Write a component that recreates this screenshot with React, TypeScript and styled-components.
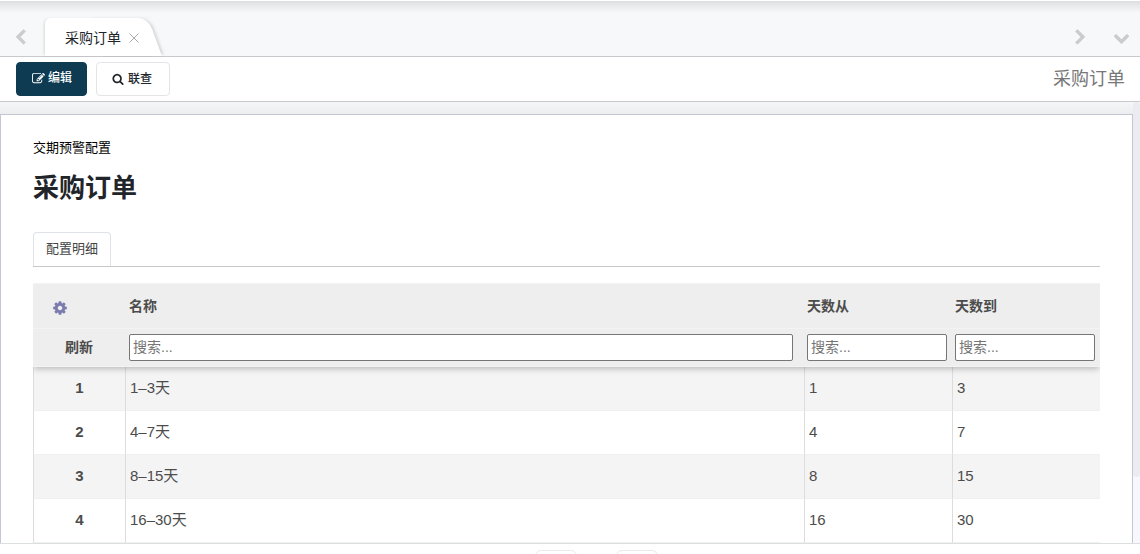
import React from "react";
import styled, { createGlobalStyle, css } from "styled-components";

const GlobalStyle = createGlobalStyle`
  *, *::before, *::after { box-sizing: border-box; }
  body {
    margin: 0;
    font-family: "Liberation Sans", "Noto Sans CJK SC", sans-serif;
    font-size: 14px;
    line-height: 20px;
    color: #212529;
    background: #fff;
  }
  button, input { font: inherit; color: inherit; }
  button { cursor: pointer; }
`;

const Page = styled.div`
  display: flex;
  flex-direction: column;
  height: 100vh;
  overflow: hidden;
`;

const TabBar = styled.header`
  flex: none;
  display: flex;
  align-items: stretch;
  height: 57px;
  padding: 17px 10px 0 12px;
  border-top: 1px solid #fff;
  border-bottom: 1px solid #c9c9cd;
  background: linear-gradient(#dcdee0, #e6e8ea 4px, #f6f8fa 12px);
`;

const IconButton = styled.button`
  display: flex;
  align-items: center;
  padding: 0;
  border: 0;
  background: none;
  color: #ccc;
`;

const PageTab = styled.div`
  position: relative;
  z-index: 0;
  display: flex;
  align-items: center;
  gap: 8px;
  margin: 0 auto 0 16px;
  padding: 2px 16px 0 20px;
  border-radius: 6px 0 0 0;
  background: linear-gradient(#fff, #fff) 0 0 / 80px 100% no-repeat;
  box-shadow: -2px 0 3px -1px rgba(0, 0, 0, 0.12);

  &::after {
    content: "";
    position: absolute;
    z-index: -1;
    top: 0;
    bottom: 0;
    right: 0;
    width: 60px;
    border-radius: 0 10px 0 0;
    background: #fff;
    box-shadow: 3px 0 3px -1px rgba(0, 0, 0, 0.14);
    transform: skewX(20deg);
    transform-origin: 50% 50%;
  }
`;

const TabNav = styled.div`
  display: flex;
  gap: 24px;
`;

const Toolbar = styled.div`
  flex: none;
  display: flex;
  align-items: center;
  gap: 9px;
  height: 45px;
  padding: 0 15px 0 16px;
  border-bottom: 1px solid #c9c9cd;
  background: #fff;
`;

const ActionButton = styled.button<{ $primary?: boolean }>`
  display: flex;
  align-items: center;
  gap: 3px;
  height: 34px;
  padding: 0 15px;
  border: 1px solid #e2e4e6;
  border-radius: 4px;
  background: #fff;
  font-size: 12px;
  font-weight: 500;
  ${(p) =>
    p.$primary
      ? css`
          border-color: #0f3b52;
          background: #0f3b52;
          color: #fff;
          padding: 0 14px 2px 15px;
        `
      : css`
          gap: 4px;
          padding-right: 17px;
        `}
`;

const Crumb = styled.span`
  margin-left: auto;
  font-size: 18px;
  line-height: 24px;
  color: #777;
`;

const Body = styled.main`
  flex: 1;
  min-height: 0;
  display: flex;
  overflow: hidden;
  background: #f7f8fb;
`;

const Content = styled.div`
  flex: 1;
  min-width: 0;
  padding-top: 12px;
  background: linear-gradient(#f5f6f7, #ebedef 12px);
`;

const Sheet = styled.section`
  min-height: 440px;
  padding: 23px 32px;
  border: 1px solid #c6c5d2;
  background: #fff;
`;

const ScrollTrack = styled.div`
  width: 7px;
  background: #f7f8fb;
`;

const ScrollThumb = styled.div`
  height: 375px;
  border-radius: 4px;
  background: #ebecf1;
`;

const FieldLabel = styled.div`
  font-size: 13px;
  color: #000;
`;

const Title = styled.h1`
  margin: 10px 0 24px;
  font-size: 26px;
  line-height: 40px;
  font-weight: 700;
`;

const Tabs = styled.div`
  display: flex;
  align-items: flex-end;
  height: 35px;
  margin-bottom: 16px;
  border-bottom: 1px solid #c8c8c8;
`;

const DetailTab = styled.button`
  flex: none;
  height: 34px;
  padding: 0 12px 2px;
  border: 1px solid #dee2e6;
  border-bottom: 0;
  border-radius: 4px 4px 0 0;
  background: #fff;
  font-size: 13px;
  color: #444;
`;

const Table = styled.table`
  width: 100%;
  table-layout: fixed;
  border-collapse: separate;
  border-spacing: 0;
  color: #4c4c4c;
`;

const Head = styled.thead`
  position: relative;
  background: #eee;
  box-shadow: 0 3px 6px -1px rgba(0, 0, 0, 0.24);
  clip-path: inset(0 0 -10px 0);
`;

const HeadCell = styled.th<{ $pad?: string; $center?: boolean }>`
  height: 46px;
  padding: ${(p) => p.$pad ?? "0 5px 0 3px"};
  border-top: 1px solid #f3f3f3;
  border-bottom: 1px solid #f3f3f3;
  text-align: ${(p) => (p.$center ? "center" : "left")};
  font-weight: 700;
`;

const FilterCell = styled(HeadCell)`
  height: 38px;
  border-top: 0;
`;

const SearchInput = styled.input`
  display: block;
  width: 100%;
  height: 27px;
  padding: 0 3px 2px;
  border: 1px solid #767676;
  border-radius: 2px;
  background: #fff;
  font-weight: 400;

  &::placeholder {
    color: #757575;
    opacity: 1;
  }
`;

const Row = styled.tr`
  &:nth-child(odd) {
    background: #f4f4f4;
  }
`;

const cell = css`
  height: 44px;
  padding: 0 4px 1px;
  border-left: 1px solid #dcdcdf;
  border-bottom: 1px solid #f0f0f1;
  font-size: 15px;
`;

const Cell = styled.td`
  ${cell}
`;

const IndexCell = styled.th`
  ${cell}
  text-align: center;
`;

const Footer = styled.footer`
  flex: 0 0 11px;
  display: flex;
  justify-content: center;
  gap: 39px;
  padding: 6px 0 0 53px;
  border-top: 1px solid #dcdfe0;
  background: #fff;
  overflow: hidden;
`;

const PagerButton = styled.button`
  flex: none;
  width: 42px;
  height: 30px;
  border: 1px solid #e8eaeb;
  border-radius: 6px;
  background: #fff;
`;

const icons = {
  left: "M1427 301l-531 531 531 531q19 19 19 45t-19 45l-166 166q-19 19-45 19t-45-19l-742-742q-19-19-19-45t19-45l742-742q19-19 45-19t45 19l166 166q19 19 19 45t-19 45z",
  right:
    "M1363 877l-742 742q-19 19-45 19t-45-19l-166-166q-19-19-19-45t19-45l531-531-531-531q-19-19-19-45t19-45l166-166q19-19 45-19t45 19l742 742q19 19 19 45t-19 45z",
  down: "M1683 808l-742 741q-19 19-45 19t-45-19l-742-741q-19-19-19-45.500t19-45.500l166-165q19-19 45-19t45 19l531 531 531-531q19-19 45-19t45 19l166 165q19 19 19 45.500t-19 45.500z",
  edit: "M888 1184l116-116-152-152-116 116v56h96v96h56zm440-720q-16-16-33 1l-350 350q-17 17-1 33t33-1l350-350q17-17 1-33zm80 594v190q0 119-84.500 203.500t-203.500 84.500h-832q-119 0-203.500-84.500t-84.500-203.500v-832q0-119 84.500-203.500t203.500-84.500h832q63 0 117 25 15 7 18 23 3 17-9 29l-49 49q-14 14-32 8-23-6-45-6h-832q-66 0-113 47t-47 113v832q0 66 47 113t113 47h832q66 0 113-47t47-113v-126q0-13 9-22l64-64q15-15 35-7t20 29zm-96-738l288 288-672 672h-288v-288zm444 132l-92 92-288-288 92-92q28-28 68-28t68 28l152 152q28 28 28 68t-28 68z",
  search:
    "M1216 832q0-185-131.500-316.500t-316.500-131.500-316.500 131.500-131.500 316.500 131.500 316.500 316.500 131.500 316.500-131.500 131.500-316.500zm512 832q0 52-38 90t-90 38q-54 0-90-38l-343-342q-179 124-399 124-143 0-273.500-55.500t-225-150-150-225-55.500-273.500 55.500-273.500 150-225 225-150 273.500-55.500 273.500 55.500 225 150 150 225 55.500 273.500q0 220-124 399l343 343q37 37 37 90z",
  cog: "M1152 896q0-106-75-181t-181-75-181 75-75 181 75 181 181 75 181-75 75-181zm512-109v222q0 12-8 23t-20 13l-185 28q-19 54-39 91 35 50 107 138 10 12 10 25t-9 23q-27 37-99 108t-94 71q-12 0-26-9l-138-108q-44 23-91 38-16 136-29 186-7 28-36 28h-222q-14 0-24.500-8.500t-11.500-21.500l-28-184q-49-16-90-37l-141 107q-10 9-25 9-14 0-25-11-126-114-165-168-7-10-7-23 0-12 8-23 15-21 51-66.500t54-70.500q-27-50-41-99l-183-27q-13-2-21-12.500t-8-23.500v-222q0-12 8-23t19-13l186-28q14-46 39-92-40-57-107-138-10-12-10-24 0-10 9-23 26-36 98.500-107.500t94.500-71.500q13 0 26 10l138 107q44-23 91-38 16-136 29-186 7-28 36-28h222q14 0 24.500 8.500t11.500 21.500l28 184q49 16 90 37l142-107q9-9 24-9 13 0 25 10 129 119 165 170 7 8 7 22 0 12-8 23-15 21-51 66.500t-54 70.500q26 50 41 98l183 28q13 2 21 12.500t8 23.500z",
};

function Icon({ name, size }: { name: keyof typeof icons; size: number }) {
  return (
    <svg width={size} height={size} viewBox="0 0 1792 1792" fill="currentColor" aria-hidden="true">
      <path d={icons[name]} />
    </svg>
  );
}

const SettingsButton = styled(IconButton)`
  color: #7c7bad;
`;

const CloseIcon = () => (
  <svg width="10" height="10" viewBox="0 0 10 10" stroke="#aaa" fill="none" aria-hidden="true">
    <path d="M0.500 0.500L9.500 9.500M9.500 0.500L0.500 9.500" />
  </svg>
);

const rows = [
  { name: "1–3天", from: 1, to: 3 },
  { name: "4–7天", from: 4, to: 7 },
  { name: "8–15天", from: 8, to: 15 },
  { name: "16–30天", from: 16, to: 30 },
];

export default function App() {
  return (
    <Page>
      <GlobalStyle />
      <TabBar>
        <IconButton aria-label="向左">
          <Icon name="left" size={17} />
        </IconButton>
        <PageTab>
          采购订单
          <IconButton aria-label="关闭">
            <CloseIcon />
          </IconButton>
        </PageTab>
        <TabNav>
          <IconButton aria-label="向右">
            <Icon name="right" size={17} />
          </IconButton>
          <IconButton aria-label="更多">
            <Icon name="down" size={17} />
          </IconButton>
        </TabNav>
      </TabBar>
      <Toolbar>
        <ActionButton $primary>
          <Icon name="edit" size={13} />
          编辑
        </ActionButton>
        <ActionButton>
          <Icon name="search" size={12} />
          联查
        </ActionButton>
        <Crumb>采购订单</Crumb>
      </Toolbar>
      <Body>
        <Content>
          <Sheet>
            <FieldLabel>交期预警配置</FieldLabel>
            <Title>采购订单</Title>
            <Tabs>
              <DetailTab>配置明细</DetailTab>
            </Tabs>
            <Table>
              <colgroup>
                <col width="92" />
                <col />
                <col width="148" />
                <col width="148" />
              </colgroup>
              <Head>
                <tr>
                  <HeadCell $pad="4px 19px 0">
                    <SettingsButton aria-label="设置">
                      <Icon name="cog" size={16} />
                    </SettingsButton>
                  </HeadCell>
                  <HeadCell $pad="0 11px 0 4px">名称</HeadCell>
                  <HeadCell>天数从</HeadCell>
                  <HeadCell>天数到</HeadCell>
                </tr>
                <tr>
                  <FilterCell $pad="0 0 2px" $center>
                    刷新
                  </FilterCell>
                  <FilterCell $pad="0 11px 0 4px">
                    <SearchInput aria-label="名称" placeholder="搜索..." />
                  </FilterCell>
                  <FilterCell>
                    <SearchInput aria-label="天数从" placeholder="搜索..." />
                  </FilterCell>
                  <FilterCell>
                    <SearchInput aria-label="天数到" placeholder="搜索..." />
                  </FilterCell>
                </tr>
              </Head>
              <tbody>
                {rows.map((row, i) => (
                  <Row key={row.name}>
                    <IndexCell scope="row">{i + 1}</IndexCell>
                    <Cell>{row.name}</Cell>
                    <Cell>{row.from}</Cell>
                    <Cell>{row.to}</Cell>
                  </Row>
                ))}
              </tbody>
            </Table>
          </Sheet>
        </Content>
        <ScrollTrack>
          <ScrollThumb />
        </ScrollTrack>
      </Body>
      <Footer>
        <PagerButton aria-label="上一页" />
        <PagerButton aria-label="下一页" />
      </Footer>
    </Page>
  );
}
